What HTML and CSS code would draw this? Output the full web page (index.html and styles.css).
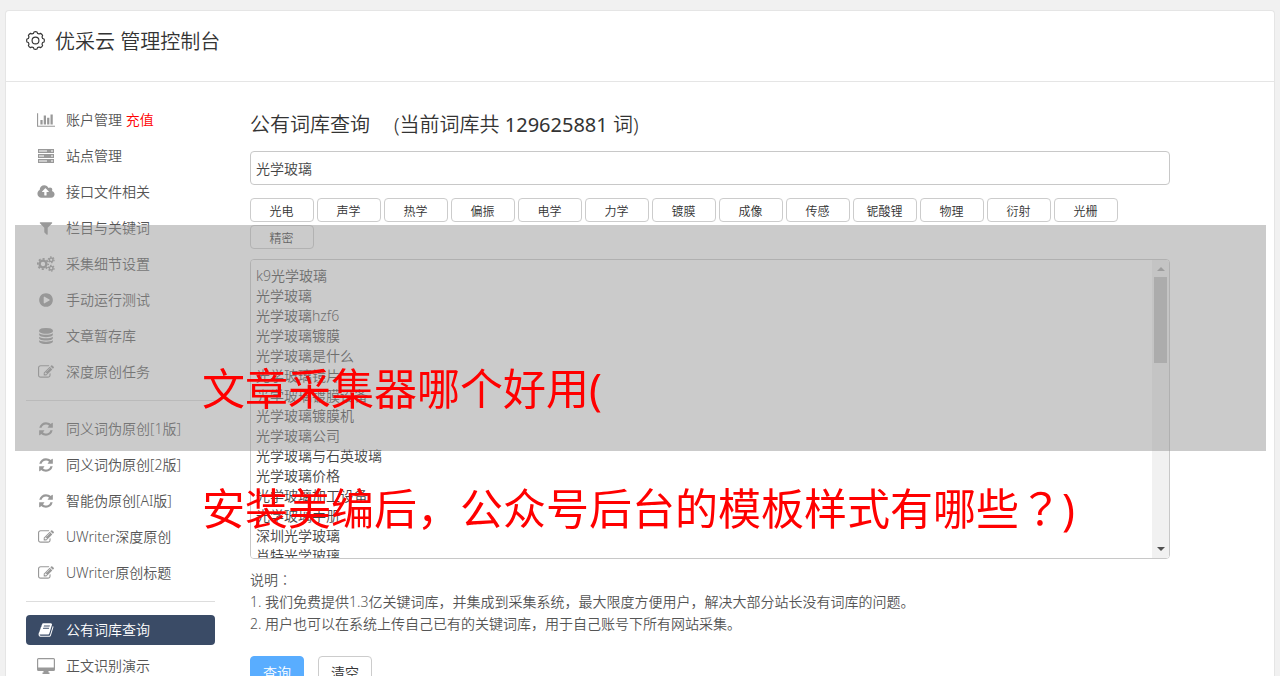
FILE: index.html
```html
<!DOCTYPE html>
<html lang="zh-CN">
<head>
<meta charset="utf-8">
<title>优采云 管理控制台</title>
<link rel="stylesheet" href="styles.css">
</head>
<body>
<svg class="sprite" aria-hidden="true">
  <symbol id="chart" viewBox="0 0 2048 1792"><path d="M640 896v512h-256v-512h256zm384-512v1024h-256v-1024h256zm1024 1152v128h-2048v-1536h128v1408h1920zm-640-896v768h-256v-768h256zm384-384v1152h-256v-1152h256z"/></symbol>
  <symbol id="server" viewBox="0 0 18 16"><path fill-rule="evenodd" d="M1 1h16v4H1zM2 2.500v1h8v-1zM14 2.500v1h2v-1zM1 6h16v4H1zM2 7.500v1h5v-1zM14 7.500v1h2v-1zM1 11h16v4H1zM2 12.500v1h8v-1zM14 12.500v1h2v-1z"/></symbol>
  <symbol id="cloud" viewBox="0 0 1920 1792"><path d="M1280 864q0-14-9-23l-352-352q-9-9-23-9t-23 9l-351 351q-10 12-10 24 0 14 9 23t23 9h224v352q0 13 9.500 22.500t22.500 9.500h192q13 0 22.500-9.500t9.500-22.500v-352h224q13 0 22.500-9.500t9.500-22.500zm640 288q0 159-112.500 271.500t-271.500 112.500h-1088q-185 0-316.500-131.500t-131.500-316.500q0-130 70-240t188-165q-2-30-2-43 0-212 150-362t362-150q156 0 285.500 87t188.500 231q71-62 166-62 106 0 181 75t75 181q0 76-41 138 130 31 213.500 135.500t83.500 238.500z"/></symbol>
  <symbol id="filter" viewBox="0 0 1792 1792"><path d="M1595 295q17 41-14 70l-493 493v742q0 42-39 59-13 5-25 5-27 0-45-19l-256-256q-19-19-19-45v-486l-493-493q-31-29-14-70 17-39 59-39h1280q42 0 59 39z"/></symbol>
  <symbol id="cogs" viewBox="0 0 18 16"><g fill="none" stroke="currentColor"><circle cx="6" cy="8" r="3.400" stroke-width="2.400"/><circle cx="6" cy="8" r="5.200" stroke-width="1.800" stroke-dasharray="2.080 2.004" stroke-dashoffset="1.040"/><circle cx="14.200" cy="3.800" r="1.800" stroke-width="1.400"/><circle cx="14.200" cy="3.800" r="2.900" stroke-width="1.200" stroke-dasharray="1.500 1.537"/><circle cx="14.200" cy="12.200" r="1.800" stroke-width="1.400"/><circle cx="14.200" cy="12.200" r="2.900" stroke-width="1.200" stroke-dasharray="1.500 1.537"/></g></symbol>
  <symbol id="play" viewBox="0 0 1792 1792"><path d="M896 128q209 0 385.500 103t279.500 279.500 103 385.500-103 385.500-279.500 279.500-385.500 103-385.500-103-279.500-279.500-103-385.500 103-385.500 279.500-279.500 385.500-103zm384 823q32-18 32-55t-32-55l-544-320q-31-19-64-1-32 19-32 56v640q0 37 32 56 16 8 32 8 17 0 32-9z"/></symbol>
  <symbol id="database" viewBox="0 0 1792 1792"><path d="M896 768q237 0 443-43t325-127v170q0 69-103 128t-280 93.500-385 34.500-385-34.500-280-93.500-103-128v-170q119 84 325 127t443 43zm0 768q237 0 443-43t325-127v170q0 69-103 128t-280 93.500-385 34.500-385-34.500-280-93.500-103-128v-170q119 84 325 127t443 43zm0-384q237 0 443-43t325-127v170q0 69-103 128t-280 93.500-385 34.500-385-34.500-280-93.500-103-128v-170q119 84 325 127t443 43zm0-1152q208 0 385 34.500t280 93.500 103 128v128q0 69-103 128t-280 93.500-385 34.500-385-34.500-280-93.500-103-128v-128q0-69 103-128t280-93.500 385-34.500z"/></symbol>
  <symbol id="edit" viewBox="0 0 1792 1792"><path d="M888 1184l116-116-152-152-116 116v56h96v96h56zm440-720q-16-16-33 1l-350 350q-17 17-1 33t33-1l350-350q17-17 1-33zm80 594v190q0 119-84.500 203.500t-203.500 84.500h-832q-119 0-203.500-84.500t-84.500-203.500v-832q0-119 84.500-203.500t203.500-84.500h832q63 0 117 25 15 7 18 23 3 17-9 29l-49 49q-14 14-32 8-23-6-45-6h-832q-66 0-113 47t-47 113v832q0 66 47 113t113 47h832q66 0 113-47t47-113v-126q0-13 9-22l64-64q15-15 35-7t20 29zm-96-738l288 288-672 672h-288v-288zm444 132l-92 92-288-288 92-92q28-28 68-28t68 28l152 152q28 28 28 68t-28 68z"/></symbol>
  <symbol id="refresh" viewBox="0 0 1792 1792"><path d="M1639 1056q0 5-1 7-64 268-268 434.500t-478 166.500q-146 0-282.500-55t-243.500-157l-129 129q-19 19-45 19t-45-19-19-45v-448q0-26 19-45t45-19h448q26 0 45 19t19 45-19 45l-137 137q71 66 161 102t187 36q134 0 250-65t186-179q11-17 53-117 8-23 30-23h192q13 0 22.500 9.500t9.500 22.500zm25-800v448q0 26-19 45t-45 19h-448q-26 0-45-19t-19-45 19-45l138-138q-148-137-349-137-134 0-250 65t-186 179q-11 17-53 117-8 23-30 23h-199q-13 0-22.500-9.500t-9.500-22.500v-7q65-268 270-434.500t480-166.500q146 0 284 55.500t245 156.500l130-129q19-19 45-19t45 19 19 45z"/></symbol>
  <symbol id="book" viewBox="0 0 1792 1792"><path d="M1703 478q40 57 18 129l-275 906q-19 64-76.500 107.500t-122.500 43.500h-923q-77 0-148.500-53.500t-99.500-131.500q-24-67-2-127 0-4 3-27t4-37q1-8-3-21.500t-3-19.500q2-11 8-21t16.500-23.500 16.500-23.500q23-38 45-91.500t30-91.500q3-10 .5-30t-.5-28q3-11 17-28t17-23q21-36 42-92t25-90q1-9-2.500-32t.5-28q4-13 22-30.500t22-22.500q19-26 42.500-84.500t27.500-96.500q1-8-3-25.500t-2-26.500q2-8 9-18t18-23 17-21q8-12 16.500-30.500t15-35 16-36 19.500-32 26.500-23.500 36-11.500 47.500 5.500l-1 3q38-9 51-9h761q74 0 114 56t18 130l-274 906q-36 119-71.500 153.500t-128.500 34.500h-869q-27 0-38 15-11 16-1 43 24 70 144 70h923q29 0 56-15.500t35-41.500l300-987q7-22 5-57 38 15 59 43zm-1064 2q-4 13 2 22.500t20 9.500h608q13 0 25.500-9.500t16.500-22.500l21-64q4-13-2-22.500t-20-9.500h-608q-13 0-25.500 9.500t-16.500 22.500zm-83 256q-4 13 2 22.500t20 9.500h608q13 0 25.500-9.500t16.500-22.500l21-64q4-13-2-22.500t-20-9.500h-608q-13 0-25.500 9.500t-16.500 22.500z"/></symbol>
  <symbol id="desktop" viewBox="0 0 18 16"><path fill-rule="evenodd" d="M1.500 0h15Q18 0 18 1.500v10q0 1.500-1.500 1.500H11.500v1.500h1V16h-7v-1.500h1V13h-5Q0 13 0 11.500v-10Q0 0 1.500 0zM1.200 1.200v8.300h15.600V1.200z"/></symbol>
</svg>

<div class="panel">
  <header class="panel-head">
    <svg class="gear" viewBox="-10 -10 20 20" aria-hidden="true"><path d="M9-1.600Q9.600 0 9 1.600L7.500 2.100L6.800 3.800L7.500 5.200Q6.800 6.800 5.200 7.500L3.800 6.800L2.100 7.500L1.600 9Q0 9.600-1.600 9L-2.100 7.500L-3.800 6.800L-5.200 7.500Q-6.800 6.800-7.500 5.200L-6.800 3.800L-7.500 2.100L-9 1.600Q-9.600 0-9-1.600L-7.500-2.100L-6.800-3.800L-7.500-5.200Q-6.800-6.800-5.200-7.500L-3.800-6.800L-2.100-7.500L-1.600-9Q0-9.600 1.600-9L2.100-7.500L3.800-6.800L5.200-7.500Q6.800-6.800 7.500-5.200L6.800-3.800L7.500-2.100Z"/><circle r="3.600"/></svg>
    <h1>优采云 管理控制台</h1>
  </header>
  <div class="columns">
    <nav class="side">
      <div class="item"><a href="#"><svg><use href="#chart"/></svg>账户管理</a>&nbsp;<a href="#" class="pay">充值</a></div>
      <a class="item" href="#"><svg><use href="#server"/></svg>站点管理</a>
      <a class="item" href="#"><svg><use href="#cloud"/></svg>接口文件相关</a>
      <a class="item" href="#"><svg><use href="#filter"/></svg>栏目与关键词</a>
      <a class="item" href="#"><svg><use href="#cogs"/></svg>采集细节设置</a>
      <a class="item" href="#"><svg><use href="#play"/></svg>手动运行测试</a>
      <a class="item" href="#"><svg><use href="#database"/></svg>文章暂存库</a>
      <a class="item" href="#"><svg><use href="#edit"/></svg>深度原创任务</a>
      <hr>
      <a class="item" href="#"><svg><use href="#refresh"/></svg>同义词伪原创[1版]</a>
      <a class="item" href="#"><svg><use href="#refresh"/></svg>同义词伪原创[2版]</a>
      <a class="item" href="#"><svg><use href="#refresh"/></svg>智能伪原创[AI版]</a>
      <a class="item" href="#"><svg><use href="#edit"/></svg>UWriter深度原创</a>
      <a class="item" href="#"><svg><use href="#edit"/></svg>UWriter原创标题</a>
      <hr>
      <a class="item active" href="#" aria-current="page"><svg><use href="#book"/></svg>公有词库查询</a>
      <a class="item" href="#"><svg><use href="#desktop"/></svg>正文识别演示</a>
    </nav>
    <main class="main">
      <h2><span>公有词库查询</span><span>(当前词库共 <span class="count">129625881</span> 词)</span></h2>
      <input class="field" type="text" value="光学玻璃" aria-label="关键词">
      <div class="tags">
        <button type="button">光电</button><button type="button">声学</button><button type="button">热学</button><button type="button">偏振</button><button type="button">电学</button><button type="button">力学</button><button type="button">镀膜</button><button type="button">成像</button><button type="button">传感</button><button type="button">铌酸锂</button><button type="button">物理</button><button type="button">衍射</button><button type="button">光栅</button><button type="button">精密</button>
      </div>
      <div class="words">
        <textarea class="field" aria-label="查询结果">k9光学玻璃
光学玻璃
光学玻璃hzf6
光学玻璃镀膜
光学玻璃是什么
光学玻璃镜片
光学玻璃镀膜设备
光学玻璃镀膜机
光学玻璃公司
光学玻璃与石英玻璃
光学玻璃价格
光学玻璃加工设备
光学玻璃手册
深圳光学玻璃
肖特光学玻璃</textarea>
        <div class="scrollbar" aria-hidden="true">
          <svg class="up" viewBox="0 0 8 4"><path d="M0 4L4 0L8 4z"/></svg>
          <div class="track"><div class="thumb"></div></div>
          <svg class="down" viewBox="0 0 8 4"><path d="M0 0L4 4L8 0z"/></svg>
        </div>
      </div>
      <div class="notes">
        <p>说明<span class="mid" lang="ja">：</span></p>
        <p>1. 我们免费提供1.3亿关键词库，并集成到采集系统，最大限度方便用户，解决大部分站长没有词库的问题。</p>
        <p>2. 用户也可以在系统上传自己已有的关键词库，用于自己账号下所有网站采集。</p>
      </div>
      <div class="actions">
        <button type="button" class="primary">查询</button>
        <button type="button">清空</button>
      </div>
    </main>
  </div>
</div>
<div class="band"></div>
<div class="caption">
  <p>文章采集器哪个好用(</p>
  <p>安装美编后，公众号后台的模板样式有哪些<span class="mid" lang="ja">？</span>)</p>
</div>
</body>
</html>
```
FILE: styles.css
```css
* { box-sizing: border-box; }
body {
  margin: 0;
  padding: 10px 5px 0;
  height: 100vh;
  overflow: hidden;
  position: relative;
  background: #f1f1f1;
  color: #555;
  font: 300 14px/20px "Noto Sans", "Noto Sans CJK SC DemiLight", "Noto Sans CJK SC", sans-serif;
}
h1, h2, p { margin: 0; font-weight: inherit; }
a { color: inherit; text-decoration: none; }
button, input, textarea { font: inherit; color: inherit; }
.sprite { display: none; }
.mid { font-family: "Noto Sans CJK JP", sans-serif; line-height: 1; }

.panel {
  min-height: 100%;
  background: #fff;
  border: 1px solid #e5e5e5;
  border-bottom: 0;
  border-radius: 4px 4px 0 0;
}
.panel-head {
  display: flex;
  align-items: center;
  gap: 10px;
  height: 71px;
  padding: 0 20px 8px;
  border-bottom: 1px solid #e5e5e5;
  color: #333;
}
.panel-head h1 { font-size: 20px; line-height: 30px; }
.gear { width: 19px; height: 19px; margin-bottom: 3px; fill: none; stroke: #333; stroke-width: 1.200; stroke-linejoin: round; }

.columns { display: flex; gap: 35px; padding: 23px 104px 0 20px; }
.side { flex: 0 0 189px; display: flex; flex-direction: column; gap: 6px; }
.item { display: flex; align-items: center; height: 30px; padding-left: 11px; border-radius: 4px; }
.item a { display: flex; align-items: center; }
.item svg { width: 18px; height: 16px; margin-right: 11px; fill: currentColor; color: #999; }
.item .pay { color: #f00; }
.side hr { width: 100%; margin: 7px 0; border: 0; border-top: 1px solid #ddd; }
.item.active { background: #3a4b66; color: #fff; }
.item.active svg { color: #fff; }

.main { flex: 1; min-width: 0; padding-top: 5px; }
.main h2 { display: flex; gap: 24px; margin-bottom: 11px; color: #333; font-size: 20px; line-height: 30px; }
.count { font-weight: 400; }
.field {
  display: block;
  width: 100%;
  height: 34px;
  padding: 0 5px;
  border: 1px solid #c8c8c8;
  border-radius: 4px;
  background: #fff;
  color: #444;
}
.tags { display: flex; flex-wrap: wrap; gap: 3px; margin: 13px 0 10px; }
.tags button {
  width: 64px;
  height: 24px;
  padding: 3px 1px 0 0;
  border: 1px solid #ccc;
  border-radius: 4px;
  background: #fff;
  color: #333;
  font-size: 12px;
  line-height: 20px;
}
.words { position: relative; }
.words .field { height: 300px; padding: 6px 22px 0 5px; resize: none; line-height: 20px; }
.scrollbar {
  position: absolute;
  top: 1px;
  right: 1px;
  bottom: 1px;
  width: 17px;
  display: flex;
  flex-direction: column;
  align-items: center;
  padding: 7px 0;
  gap: 6px;
  background: #f1f1f1;
  border-radius: 0 3px 3px 0;
}
.scrollbar svg { width: 8px; height: 4px; }
.up { fill: #a3a3a3; }
.down { fill: #505050; }
.track { flex: 1; }
.thumb { width: 13px; height: 86px; background: #c1c1c1; }
.notes { padding-top: 10px; line-height: 22px; }
.actions { display: flex; gap: 14px; margin-top: 21px; }
.actions button { width: 54px; height: 34px; padding: 0; border: 1px solid #ccc; border-radius: 4px; background: #fff; color: #333; }
.actions .primary { border-color: #59adff; background: #59adff; color: #fff; }

/* Title banner lying over the page */
.band { position: absolute; top: 225px; left: 15px; right: 14px; height: 226px; background: rgba(151, 151, 151, .5); }
.caption {
  position: absolute;
  top: 329px;
  left: 202px;
  color: #f00;
  font: 400 43px/120px "Noto Sans", "Noto Sans CJK SC", sans-serif;
  white-space: nowrap;
}
```
